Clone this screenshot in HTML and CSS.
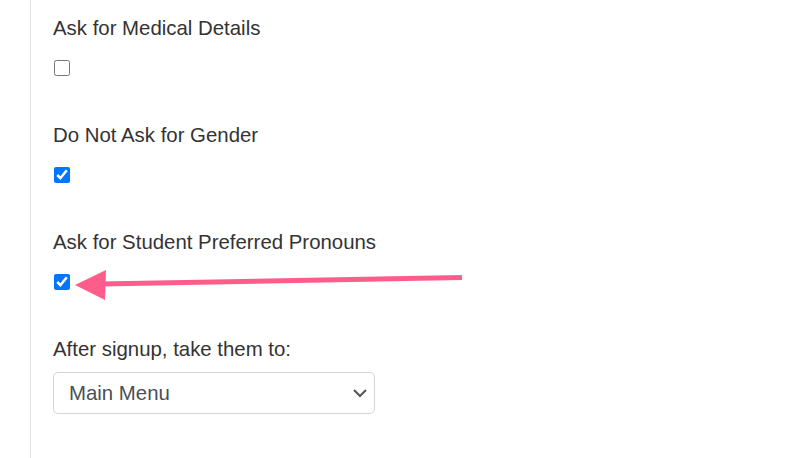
FILE: index.html
```html
<!DOCTYPE html>
<html lang="en">
<head>
    <meta charset="UTF-8">
    <meta name="viewport" content="width=device-width, initial-scale=1.0">
    <title>Signup Settings</title>
    <link rel="stylesheet" href="styles.css">
</head>
<body>
    <div class="panel">
        <div class="field">
            <label for="medical">Ask for Medical Details</label>
            <input type="checkbox" id="medical" name="medical">
        </div>

        <div class="field">
            <label for="gender">Do Not Ask for Gender</label>
            <input type="checkbox" id="gender" name="gender" checked>
        </div>

        <div class="field">
            <label for="pronouns">Ask for Student Preferred Pronouns</label>
            <input type="checkbox" id="pronouns" name="pronouns" checked>
        </div>

        <div class="field field-select">
            <label for="after">After signup, take them to:</label>
            <div class="select-wrap">
                <select id="after" name="after">
                    <option>Main Menu</option>
                    <option>My Account</option>
                    <option>Schedule</option>
                </select>
                <svg class="chevron" width="16" height="10" viewBox="0 0 16 10">
                    <polyline points="2,2 8,8 14,2" fill="none" stroke="#555" stroke-width="2"/>
                </svg>
            </div>
        </div>
    </div>

    <!-- annotation arrow -->
    <svg class="arrow" width="806" height="458" viewBox="0 0 806 458">
        <line x1="462" y1="277.5" x2="100" y2="284" stroke="#fe5d8c" stroke-width="5"/>
        <polygon points="75,285 106,270 105,300" fill="#fe5d8c"/>
    </svg>
</body>
</html>
```

FILE: styles.css
```css
/* Reset básico */
body, label, input, select {
    margin: 0;
    padding: 0;
    font-family: "Liberation Sans", Arial, sans-serif;
}

body {
    position: relative;
    background-color: #fff;
    color: #333;
    overflow: hidden;
}

.panel {
    margin-left: 30px;
    min-height: 100vh;
    box-sizing: border-box;
    border-left: 1px solid #e3e3e3;
    padding: 13px 0 0 22px;
}

.field {
    margin-bottom: 44px;
}

.field label {
    display: block;
    font-size: 20.4px;
    line-height: 30px;
    margin-bottom: 17px;
}

.field input[type="checkbox"] {
    display: block;
    width: 16px;
    height: 16px;
    margin: 0 0 0 1px;
}

.field-select label {
    margin-top: 3px;
    margin-bottom: 8px;
}

.select-wrap {
    position: relative;
    width: 322px;
}

.field select {
    display: block;
    width: 100%;
    height: 42px;
    padding: 0 40px 0 15px;
    font-size: 20.4px;
    color: #495057;
    background-color: #fff;
    border: 1px solid #d4d4d4;
    border-radius: 5px;
    appearance: none;
    -webkit-appearance: none;
}

.chevron {
    position: absolute;
    right: 7px;
    top: 16px;
    pointer-events: none;
}

.arrow {
    position: absolute;
    top: 0;
    left: 0;
    pointer-events: none;
}
```
